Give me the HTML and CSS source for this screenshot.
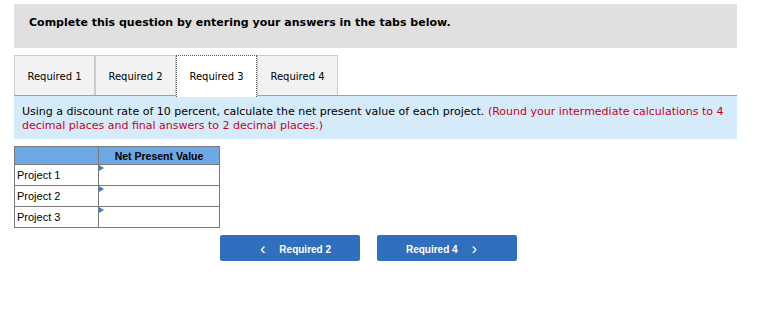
FILE: index.html
```html
<!DOCTYPE html>
<html lang="en">
<head>
  <meta charset="UTF-8">
  <title>Required 3</title>
  <link rel="stylesheet" href="styles.css">
</head>
<body>

<div class="page">
  <div class="intro">Complete this question by entering your answers in the tabs below.</div>

  <nav class="tabs">
    <span class="tab">Required 1</span>
    <span class="tab">Required 2</span>
    <span class="tab active">Required 3</span>
    <span class="tab">Required 4</span>
  </nav>

  <div class="prompt">
    Using a discount rate of 10 percent, calculate the net present value of each project.
    <span class="note">(Round your intermediate calculations to 4 decimal places and final answers to 2 decimal places.)</span>
  </div>

  <table class="grid">
    <tr>
      <th></th>
      <th>Net Present Value</th>
    </tr>
    <tr>
      <td>Project 1</td>
      <td class="input"><span class="mark"></span></td>
    </tr>
    <tr>
      <td>Project 2</td>
      <td class="input"><span class="mark"></span></td>
    </tr>
    <tr>
      <td>Project 3</td>
      <td class="input"><span class="mark"></span></td>
    </tr>
  </table>

  <div class="pager">
    <button class="nav-btn"><span class="chev">&lsaquo;</span> Required 2</button>
    <button class="nav-btn">Required 4 <span class="chev">&rsaquo;</span></button>
  </div>
</div>

</body>
</html>
```

FILE: styles.css
```css
body { margin: 0; padding: 0; font-family: "DejaVu Sans", Verdana, sans-serif; color: #000; background: #fff; }
.page { padding: 4px 33px 0 14px; }

.intro { background: #e0e0e0; height: 44px; padding-left: 15px; font-size: 11px; font-weight: bold; line-height: 38px; }

.tabs { display: flex; margin-top: 7px; border-bottom: 1px solid #a0a0a0; height: 40px; }
.tab { width: 79px; height: 39px; background: #f2f2f2; border: 1px solid #ccc; border-bottom: none; font-size: 10px; line-height: 41px; text-align: center; }
.tab.active { background: #fff; border: 1px dotted #555; border-bottom: none; height: 41px; margin-bottom: -1px; position: relative; }

.prompt { background: #d6ebf9; padding: 9px 8px 6px; height: 28px; font-size: 11px; line-height: 14px; }
.note { color: #c8001e; }

.grid { border-collapse: collapse; margin-top: 7px; font-family: "Liberation Sans", Arial, sans-serif; font-size: 11px; }
.grid th { background: #6ea8e4; height: 17px; padding: 0; border: 1px solid #7a7a7a; font-size: 10.5px; }
.grid th:first-child { width: 83px; }
.grid th:last-child { width: 120px; }
.grid td { border: 1px solid #7a7a7a; height: 20px; padding: 0 0 0 2px; }
.grid td.input { position: relative; padding: 0; }
.mark { position: absolute; left: 0; top: 0; width: 0; height: 0; border-top: 3px solid transparent; border-bottom: 3px solid transparent; border-left: 5px solid #3a7ed4; }

.pager { display: flex; gap: 17px; margin: 7px 0 0 206px; }
.nav-btn { width: 140px; height: 26px; background: #2f6fbe; color: #fff; border: none; border-radius: 2px; font-family: "Liberation Sans", Arial, sans-serif; font-weight: bold; font-size: 10px; }
.chev { font-size: 17px; font-weight: normal; margin: 0 11px; position: relative; top: 1px; }
```
